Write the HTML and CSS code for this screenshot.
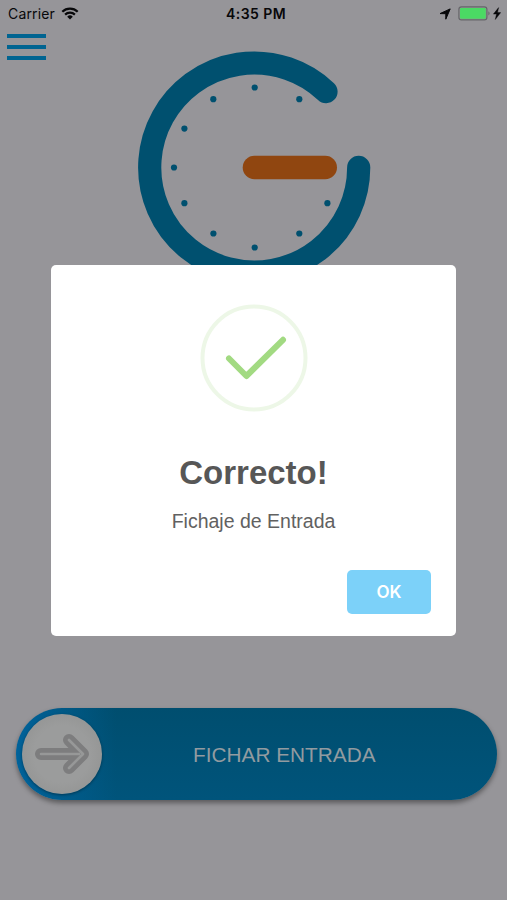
FILE: index.html
```html
<!DOCTYPE html>
<html lang="es">
<head>
    <meta charset="UTF-8">
    <meta name="viewport" content="width=device-width, initial-scale=1.0">
    <title>Fichaje</title>
    <link rel="stylesheet" href="styles.css">
</head>
<body>

<div class="screen">
    <header class="status-bar">
        <div class="status-left">
            <span class="carrier">Carrier</span>
            <svg class="wifi" width="18" height="14" viewBox="0 0 18 14">
                <path d="M1.3 4.7a11 11 0 0 1 15.4 0M4.1 7.6a7 7 0 0 1 9.8 0" fill="none" stroke="#08080a" stroke-width="2.2"/>
                <path d="M6.2 9.7a4 4 0 0 1 5.6 0L9 12.5z" fill="#08080a"/>
            </svg>
        </div>
        <div class="time">4:35 PM</div>
        <div class="status-right">
            <svg width="12" height="12" viewBox="0 0 12 12">
                <path d="M11.2.9L6.8 11.2V5.7L1 5.6z" fill="#08080a" stroke="#08080a" stroke-width="1" stroke-linejoin="round"/>
            </svg>
            <svg class="battery" width="33" height="15" viewBox="0 0 33 15">
                <rect x=".9" y=".9" width="28" height="13" rx="2.6" fill="none" stroke="#66666a" stroke-width="1.2"/>
                <rect x="2" y="2" width="25.8" height="10.8" rx="1.2" fill="#4bd964"/>
                <path d="M30.4 5.2q2.4 2.2 0 4.4z" fill="#66666a"/>
            </svg>
            <svg width="8" height="13" viewBox="0 0 8 13">
                <path d="M5.6.6L.4 7.1h3.1l-1.2 5.4L7.7 5.6H4.5z" fill="#08080a" stroke="#08080a" stroke-width=".4"/>
            </svg>
        </div>
    </header>

    <button class="menu" aria-label="Menu">
        <span></span>
        <span></span>
        <span></span>
    </button>

    <svg class="logo" width="234" height="234" viewBox="137 50.5 234 234">
        <path d="M326 92.1A104.5 104.5 0 1 0 358.7 167.9" fill="none" stroke="#00506f" stroke-width="23.2" stroke-linecap="round"/>
        <path d="M254.4 168H325.3" stroke="#904610" stroke-width="23.4" stroke-linecap="round"/>
        <g fill="#00506f">
            <circle cx="254.7" cy="88" r="3.1"/>
            <circle cx="299.3" cy="99.7" r="3.1"/>
            <circle cx="213.3" cy="99.7" r="3.1"/>
            <circle cx="184.4" cy="129.1" r="3.1"/>
            <circle cx="174" cy="168" r="3.1"/>
            <circle cx="184.4" cy="203.7" r="3.1"/>
            <circle cx="213.4" cy="234" r="3.1"/>
            <circle cx="254.7" cy="248" r="3.1"/>
            <circle cx="299.3" cy="234" r="3.1"/>
            <circle cx="327.4" cy="203.7" r="3.1"/>
        </g>
    </svg>

    <div class="slider">
        <div class="knob">
            <svg width="56" height="42" viewBox="0 0 56 42">
                <path d="M7 21H46M35 7L49 21L35 35" fill="none" stroke="#7d7d7e" stroke-width="12" stroke-linecap="round" stroke-linejoin="round"/>
                <path d="M7 21H45M35 7L49 21L35 35" fill="none" stroke="#979898" stroke-width="2.6" stroke-linecap="round" stroke-linejoin="round"/>
            </svg>
        </div>
        <span class="slider-text">FICHAR ENTRADA</span>
    </div>
</div>

<div class="overlay">
    <div class="modal">
        <svg class="check" width="108" height="108" viewBox="0 0 108 108">
            <circle cx="54" cy="54" r="51.5" fill="none" stroke="#edf7e7" stroke-width="4"/>
            <path d="M29 54.5L46.4 72L83 35.8" fill="none" stroke="#a2da82" stroke-width="6" stroke-linecap="round" stroke-linejoin="round"/>
        </svg>
        <h1>Correcto!</h1>
        <p>Fichaje de Entrada</p>
        <div class="modal-footer">
            <button class="ok">OK</button>
        </div>
    </div>
</div>

</body>
</html>
```
FILE: styles.css
```css
body {
    margin: 0;
    background-color: #969599;
    font-family: "Liberation Sans", Arial, sans-serif;
}
button {
    border: none;
    cursor: pointer;
}
svg {
    display: block;
}
.screen {
    display: flex;
    flex-direction: column;
    height: 900px;
    overflow: hidden;
}
.status-bar {
    display: grid;
    grid-template-columns: 1fr auto 1fr;
    align-items: center;
    height: 27px;
    padding: 0 6px 0 8px;
    color: #08080a;
    font-family: Inter, sans-serif;
    font-size: 14px;
}
.status-left, .status-right {
    display: flex;
    align-items: center;
}
.carrier {
    letter-spacing: 0.15px;
}
.wifi {
    margin-left: 6px;
}
.time {
    padding-left: 3px;
    font-weight: 600;
    letter-spacing: 0.45px;
}
.status-right {
    justify-content: flex-end;
}
.battery {
    margin: 0 2px 0 7px;
}
.menu {
    display: flex;
    flex-direction: column;
    gap: 7px;
    width: 39px;
    margin: 7px 0 0 7px;
    padding: 0;
    background: none;
}
.menu span {
    height: 4px;
    background-color: #006491;
}
.logo {
    margin: -10px 0 0 137px;
}
.slider {
    display: flex;
    align-items: center;
    box-sizing: border-box;
    width: 481px;
    height: 92px;
    margin: 424px 0 0 16px;
    padding-left: 6px;
    border-radius: 46px;
    background: linear-gradient(90deg, #00629a, rgba(0, 98, 154, 0) 100px), linear-gradient(#004e6f, #00547b);
    box-shadow: 0 3px 5px rgba(0, 0, 0, 0.4);
}
.knob {
    display: flex;
    align-items: center;
    justify-content: center;
    width: 80px;
    height: 80px;
    border-radius: 50%;
    background: radial-gradient(#9b9c9c 50%, #8e8f8e);
    box-shadow: 0 1px 3px rgba(0, 0, 0, 0.4);
}
.slider-text {
    margin-left: 91px;
    padding-top: 2px;
    color: #929ba0;
    font-size: 20.8px;
}
.overlay {
    position: fixed;
    inset: 0;
    display: flex;
    align-items: center;
    justify-content: center;
}
.modal {
    box-sizing: border-box;
    width: 405px;
    height: 371px;
    padding: 39px 25px 22px;
    border-radius: 5px;
    background-color: #fff;
    text-align: center;
}
.check {
    margin: 0 auto;
}
h1 {
    margin: 42px 0 0;
    color: #575757;
    font-size: 33px;
    line-height: 38px;
}
p {
    margin: 17px 0 0;
    color: #616161;
    font-size: 19.5px;
    line-height: 24px;
}
.modal-footer {
    display: flex;
    justify-content: flex-end;
    margin-top: 37px;
}
.ok {
    width: 84px;
    height: 44px;
    border-radius: 5px;
    background-color: #7cd1f9;
    color: #fff;
    font-family: Inter, sans-serif;
    font-size: 17px;
    font-weight: 600;
}
```
